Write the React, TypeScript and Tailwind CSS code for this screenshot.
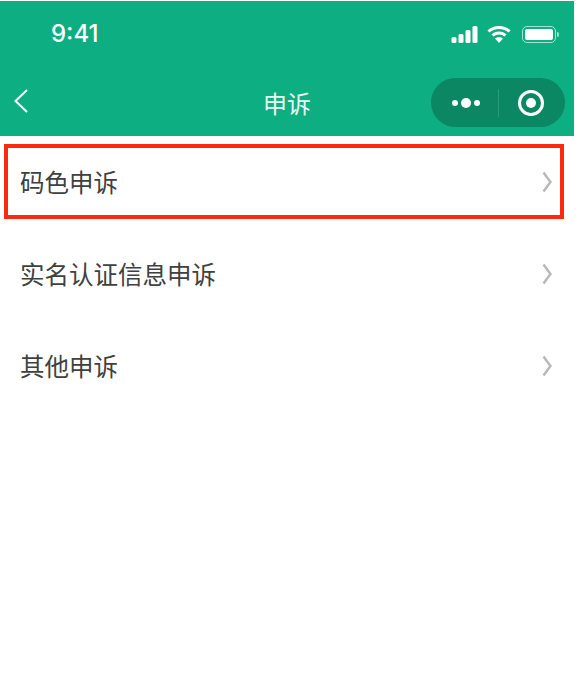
import React from "react";

const font = { fontFamily: '"Noto Sans CJK SC", "Liberation Sans", sans-serif' };

function Chevron() {
  return (
    <svg width="10" height="22" viewBox="0 0 10 22" fill="none" className="shrink-0">
      <path d="M1.5 1.5 L8.5 11 L1.5 20.5" stroke="#b8b8b8" strokeWidth="2.5" />
    </svg>
  );
}

function Row({ label, boxed }: { label: string; boxed?: boolean }) {
  return (
    <div className="relative h-[92px] flex items-center justify-between pl-5 pr-[28px]">
      <span className="text-[24.5px] leading-none text-[#404040]">{label}</span>
      <Chevron />
      {boxed && (
        <div className="absolute left-1 right-[16px] top-[8px] h-[75px] border-[4px] border-[#fb2a0c]" />
      )}
    </div>
  );
}

export default function App() {
  return (
    <div className="w-[580px] h-[687px] bg-white overflow-hidden" style={font}>
      <div className="w-[574px] bg-[#0dae81] h-[135px] flex flex-col mt-px">
        <div className="h-[66px] flex items-center justify-between pl-[51px] pr-[15px]">
          <span className="text-[24px] font-medium text-white" style={{ fontFamily: '"Inter", "Liberation Sans", sans-serif' }}>9:41</span>
          <div className="flex items-center gap-[9px]">
            <svg width="27" height="17" viewBox="0 0 26 17" fill="white">
              <rect x="0" y="11" width="5" height="6" rx="1.5" />
              <rect x="7" y="8" width="5" height="9" rx="1.5" />
              <rect x="14" y="4" width="5" height="13" rx="1.5" />
              <rect x="21" y="0" width="5" height="17" rx="1.5" />
            </svg>
            <svg width="24" height="18" viewBox="0 0 24 18" fill="none" stroke="white" strokeWidth="3">
              <path d="M1.5 6.5 C7 1 17 1 22.5 6.5" />
              <path d="M5.5 10.5 C9 7 15 7 18.5 10.5" />
              <path d="M12 18 L8 13.5 C10 11.7 14 11.7 16 13.5 Z" fill="white" stroke="none" />
            </svg>
            <div className="flex items-center gap-px ml-[2px]">
              <div className="w-[34px] h-[17px] rounded-[5px] border border-[#a8e2cf] p-[2px]">
                <div className="w-full h-full bg-white rounded-[2px]" />
              </div>
              <div className="w-[2px] h-[5px] bg-[#a8e2cf] rounded-r" />
            </div>
          </div>
        </div>
        <div className="relative flex-1 flex items-center justify-center">
          <svg width="16" height="26" viewBox="0 0 16 26" fill="none" className="absolute left-[13px] top-[21px]">
            <path d="M14 2 L2.5 13 L14 24" stroke="white" strokeWidth="2" />
          </svg>
          <span className="text-[24px] leading-none text-[#e9f8f3] mt-[2px]">申诉</span>
          <div className="absolute left-[431px] top-[11px] w-[134px] h-[49px] rounded-full bg-[#0c8763] flex items-center">
            <div className="w-[67px] flex items-center justify-center gap-[3px] pl-[2px]">
              <span className="w-[6px] h-[6px] rounded-full bg-white" />
              <span className="w-[10px] h-[10px] rounded-full bg-white" />
              <span className="w-[6px] h-[6px] rounded-full bg-white" />
            </div>
            <div className="w-px h-[28px] bg-[#2a9a79]" />
            <div className="flex-1 flex items-center justify-center pr-[3px]">
              <div className="w-[26px] h-[26px] rounded-full border-[3px] border-white flex items-center justify-center">
                <span className="w-[10px] h-[10px] rounded-full bg-white" />
              </div>
            </div>
          </div>
        </div>
      </div>
      <Row label="码色申诉" boxed />
      <Row label="实名认证信息申诉" />
      <Row label="其他申诉" />
    </div>
  );
}
